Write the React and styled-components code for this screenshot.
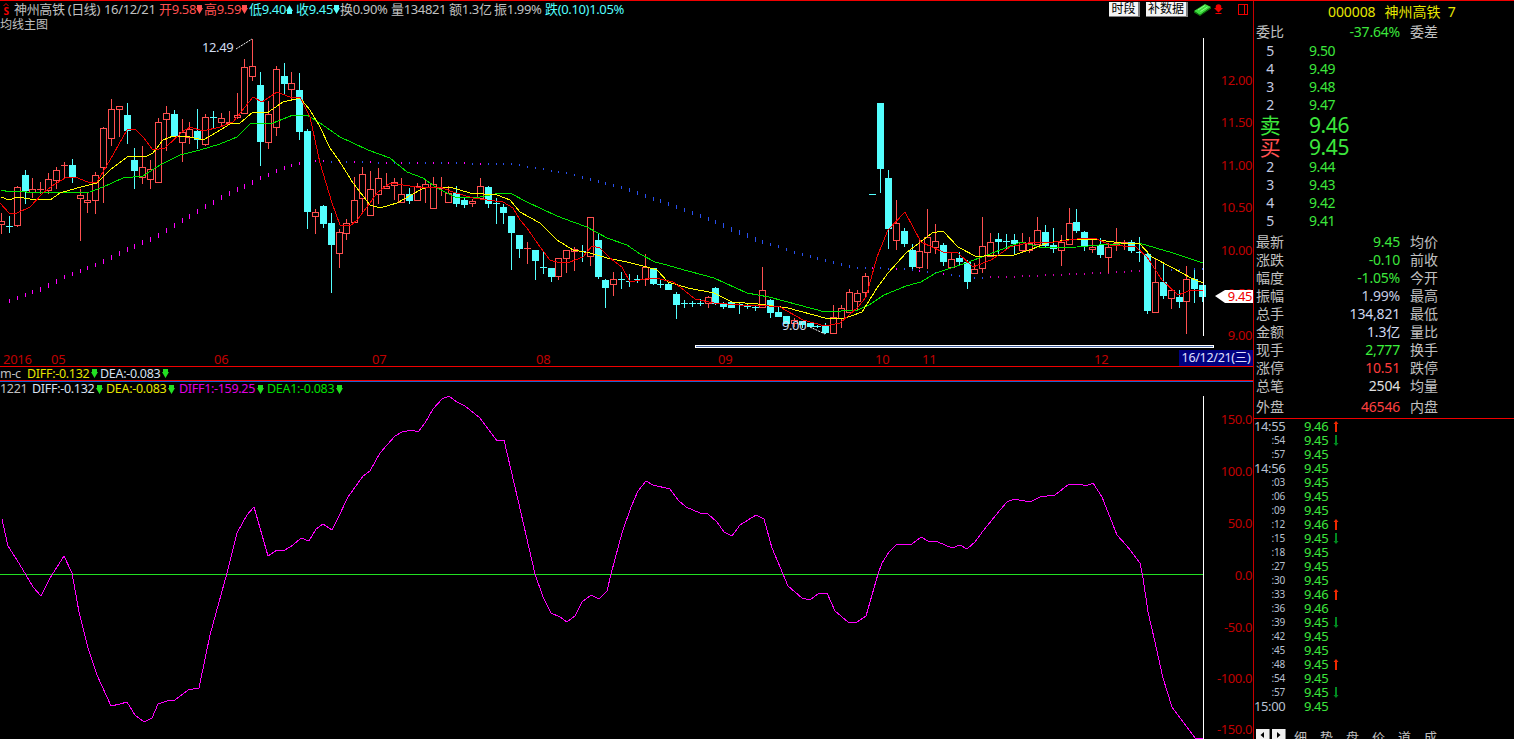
import React from 'react'
import styled, { createGlobalStyle } from 'styled-components'

const FONT = '"Noto Sans", "Noto Sans CJK SC", sans-serif'
const RED = '#ff5050'
const CYAN = '#54ffff'
const GREEN = '#3ce63c'
const GREY = '#c0c0c0'
const AXIS = '#c00000'

const xAt = i => Math.round(1 + i * 7.85)

// [type, high, body top, body bottom, low] in page pixels
const candles = [
    ['r', 213, 221, 224, 233], ['c', 216, 226, 226, 232], ['r', 186, 187, 225, 226], ['c', 170, 175, 190, 203],
    ['r', 178, 189, 192, 197], ['r', 182, 189, 189, 193], ['r', 173, 179, 190, 193], ['r', 167, 170, 180, 188],
    ['r', 162, 165, 165, 177], ['c', 159, 165, 177, 182], ['r', 189, 195, 198, 240], ['r', 193, 200, 202, 212],
    ['r', 172, 175, 200, 213], ['r', 127, 128, 167, 202], ['r', 99, 109, 138, 145], ['r', 106, 106, 109, 136],
    ['c', 103, 115, 130, 143], ['c', 148, 160, 170, 188], ['r', 146, 167, 177, 183], ['r', 160, 169, 179, 188],
    ['r', 118, 122, 182, 182], ['r', 106, 113, 119, 150], ['c', 110, 114, 135, 135], ['r', 119, 132, 142, 161],
    ['r', 122, 129, 137, 143], ['c', 109, 131, 139, 148], ['r', 114, 117, 144, 145], ['c', 111, 117, 117, 128],
    ['r', 113, 118, 122, 125], ['r', 111, 122, 123, 123], ['r', 93, 115, 117, 118], ['r', 59, 67, 113, 113],
    ['r', 39, 66, 76, 80], ['c', 72, 85, 141, 165], ['r', 101, 114, 142, 148], ['r', 66, 69, 127, 135],
    ['c', 63, 76, 83, 93], ['r', 72, 83, 89, 98], ['c', 73, 90, 131, 139], ['c', 129, 131, 211, 228],
    ['r', 209, 212, 216, 233], ['c', 205, 206, 223, 227], ['c', 213, 223, 244, 292], ['r', 229, 232, 253, 267],
    ['r', 219, 223, 233, 239], ['r', 177, 200, 222, 222], ['r', 167, 174, 198, 213], ['r', 171, 189, 215, 215],
    ['r', 168, 178, 194, 203], ['r', 173, 186, 188, 188], ['r', 178, 182, 185, 199], ['r', 178, 194, 202, 202],
    ['c', 188, 194, 200, 203], ['r', 183, 186, 200, 200], ['r', 180, 184, 187, 202], ['r', 177, 184, 208, 208],
    ['r', 177, 187, 188, 195], ['r', 186, 193, 202, 202], ['c', 186, 193, 203, 206], ['c', 197, 200, 204, 207],
    ['r', 199, 201, 203, 206], ['r', 178, 186, 198, 198], ['c', 186, 187, 203, 207], ['c', 198, 203, 203, 223],
    ['c', 204, 207, 212, 223], ['c', 216, 216, 232, 269], ['c', 235, 235, 248, 257], ['r', 242, 248, 248, 263],
    ['c', 250, 250, 260, 279], ['c', 252, 267, 267, 273], ['c', 268, 268, 276, 281], ['r', 258, 258, 276, 279],
    ['r', 250, 250, 258, 272], ['r', 247, 249, 251, 270], ['c', 245, 251, 251, 261], ['r', 217, 217, 256, 265],
    ['c', 233, 240, 276, 278], ['c', 279, 280, 287, 307], ['r', 272, 279, 284, 295], ['c', 272, 279, 279, 288],
    ['c', 274, 281, 281, 286], ['c', 275, 279, 279, 282], ['r', 254, 267, 279, 285], ['c', 268, 268, 283, 284],
    ['c', 280, 284, 284, 287], ['c', 282, 284, 289, 289], ['c', 292, 294, 304, 318], ['c', 300, 303, 303, 307],
    ['c', 301, 303, 303, 306], ['c', 299, 303, 303, 305], ['r', 296, 297, 303, 307], ['c', 287, 288, 303, 304],
    ['c', 302, 304, 306, 308], ['c', 302, 302, 307, 307], ['c', 302, 304, 304, 313], ['c', 303, 306, 306, 308],
    ['c', 305, 307, 307, 310], ['r', 267, 290, 307, 307], ['c', 299, 300, 312, 317], ['c', 307, 312, 316, 316],
    ['c', 316, 316, 323, 323], ['r', 318, 320, 323, 326], ['c', 321, 321, 324, 327], ['c', 323, 323, 326, 326],
    ['c', 325, 326, 326, 327], ['c', 323, 326, 332, 333], ['r', 305, 317, 333, 333], ['r', 305, 308, 318, 327],
    ['r', 289, 292, 312, 312], ['r', 290, 293, 301, 310], ['r', 273, 276, 292, 297], ['c', 194, 194, 194, 194],
    ['c', 103, 103, 168, 192], ['c', 170, 178, 228, 248], ['r', 200, 223, 240, 249], ['c', 228, 231, 243, 246],
    ['c', 244, 250, 266, 268], ['r', 240, 251, 267, 268], ['r', 209, 237, 252, 268], ['r', 224, 241, 247, 253],
    ['c', 243, 245, 261, 265], ['r', 252, 259, 267, 267], ['c', 252, 258, 261, 265], ['c', 260, 262, 281, 288],
    ['r', 263, 269, 273, 273], ['r', 217, 246, 268, 272], ['r', 233, 242, 256, 256], ['c', 233, 239, 241, 255],
    ['c', 234, 241, 241, 248], ['c', 234, 240, 243, 253], ['r', 233, 242, 250, 252], ['r', 237, 243, 250, 252],
    ['r', 217, 230, 244, 244], ['c', 225, 232, 245, 247], ['c', 228, 245, 248, 252], ['r', 235, 242, 250, 265],
    ['r', 208, 223, 244, 244], ['c', 209, 222, 230, 232], ['c', 231, 232, 246, 250], ['r', 240, 247, 249, 252],
    ['c', 238, 245, 254, 257], ['r', 243, 247, 257, 272], ['r', 228, 243, 245, 250], ['r', 240, 242, 243, 249],
    ['c', 240, 242, 250, 252], ['c', 237, 252, 252, 261], ['c', 253, 254, 310, 313], ['r', 258, 282, 312, 312],
    ['c', 263, 282, 295, 298], ['r', 290, 290, 298, 308], ['c', 290, 297, 301, 307], ['r', 266, 279, 301, 333],
    ['c', 270, 279, 288, 302], ['c', 285, 285, 296, 301],
]

const ma5 = [[0, 203], [9, 213], [17, 213], [30, 207], [43, 193], [55, 184], [67, 177], [75, 177], [88, 182], [97, 182], [110, 160], [127, 130], [135, 129], [143, 137], [153, 150], [165, 148], [182, 132], [190, 127], [203, 131], [220, 127], [233, 122], [253, 97], [262, 102], [277, 92], [290, 97], [300, 97], [310, 117], [320, 163], [332, 203], [340, 225], [350, 226], [357, 220], [367, 207], [377, 193], [390, 183], [403, 185], [423, 188], [440, 187], [453, 192], [473, 198], [487, 200], [503, 202], [513, 208], [520, 220], [527, 228], [540, 247], [550, 260], [560, 263], [570, 262], [583, 257], [592, 246], [600, 248], [610, 258], [622, 267], [630, 282], [640, 280], [650, 278], [660, 279], [673, 282], [680, 287], [695, 299], [714, 303], [740, 305], [758, 305], [780, 307], [803, 320], [825, 326], [840, 323], [858, 307], [866, 297], [877, 257], [888, 230], [905, 212], [921, 242], [943, 252], [958, 253], [973, 267], [991, 260], [1010, 247], [1032, 242], [1054, 242], [1077, 239], [1095, 238], [1110, 245], [1136, 247], [1147, 257], [1162, 280], [1178, 295], [1191, 290], [1203, 290]]
const ma10 = [[1, 197], [9, 200], [17, 197], [30, 199], [50, 200], [60, 193], [77, 188], [97, 183], [110, 170], [127, 157], [147, 156], [153, 153], [163, 140], [173, 136], [190, 137], [203, 140], [217, 132], [230, 124], [240, 123], [253, 112], [267, 113], [283, 102], [300, 98], [310, 110], [320, 127], [330, 148], [340, 162], [353, 183], [370, 205], [380, 208], [397, 203], [420, 190], [427, 187], [450, 187], [470, 193], [497, 195], [510, 200], [520, 212], [540, 223], [557, 240], [573, 250], [590, 253], [607, 258], [627, 262], [647, 267], [657, 270], [668, 282], [688, 288], [714, 293], [732, 302], [758, 304], [788, 308], [825, 318], [843, 319], [862, 312], [877, 288], [888, 273], [906, 253], [932, 233], [943, 231], [958, 247], [977, 257], [991, 255], [1014, 255], [1032, 249], [1047, 243], [1073, 239], [1099, 240], [1121, 243], [1139, 243], [1152, 257], [1173, 268], [1191, 278], [1203, 283]]
const ma20 = [[1, 190], [10, 192], [20, 191], [33, 193], [90, 192], [103, 187], [123, 178], [143, 176], [160, 165], [180, 155], [200, 150], [220, 144], [237, 137], [250, 124], [273, 123], [293, 115], [307, 115], [320, 123], [340, 137], [368, 150], [390, 158], [407, 172], [423, 178], [437, 188], [457, 198], [480, 197], [500, 193], [510, 193], [527, 202], [557, 216], [573, 222], [587, 227], [607, 238], [627, 245], [640, 254], [655, 262], [667, 265], [677, 268], [714, 278], [747, 293], [769, 297], [799, 305], [825, 312], [858, 310], [869, 305], [884, 295], [906, 286], [921, 282], [936, 273], [966, 263], [995, 252], [1021, 242], [1043, 248], [1077, 247], [1099, 245], [1139, 243], [1173, 253], [1203, 263]]
const sar = [[0, 302], [9, 299], [33, 290], [64, 275], [96, 263], [127, 247], [158, 233], [190, 213], [221, 195], [253, 179], [284, 166], [308, 159], [331, 161], [512, 163], [535, 167], [575, 174], [622, 186], [669, 202], [716, 220], [762, 240], [795, 251], [858, 267], [904, 268], [952, 274], [975, 277], [1054, 274], [1102, 272], [1136, 270], [1203, 268]]
const diff1 = [[2, 519], [8, 546], [17, 560], [26, 575], [33, 587], [41, 596], [50, 578], [64, 556], [72, 573], [79, 612], [88, 648], [97, 675], [111, 706], [120, 704], [127, 702], [135, 715], [144, 722], [152, 718], [158, 704], [167, 701], [175, 700], [188, 690], [199, 688], [210, 635], [227, 573], [237, 533], [247, 515], [254, 507], [268, 556], [277, 550], [285, 550], [293, 545], [301, 538], [309, 541], [316, 529], [323, 524], [332, 530], [338, 518], [348, 497], [363, 476], [370, 471], [380, 453], [395, 436], [402, 432], [412, 430], [418, 432], [425, 423], [433, 409], [442, 399], [449, 396], [457, 402], [465, 406], [480, 418], [497, 441], [504, 440], [518, 500], [535, 574], [543, 597], [551, 613], [560, 617], [567, 622], [575, 616], [582, 602], [591, 595], [599, 599], [607, 591], [611, 574], [622, 533], [631, 507], [638, 491], [646, 481], [653, 485], [670, 489], [678, 500], [686, 507], [700, 513], [708, 514], [717, 522], [724, 532], [732, 536], [740, 525], [756, 515], [764, 519], [772, 548], [783, 574], [788, 586], [802, 598], [810, 600], [818, 594], [827, 593], [835, 611], [848, 622], [857, 622], [866, 616], [878, 574], [882, 563], [889, 552], [897, 544], [912, 544], [921, 537], [928, 541], [938, 542], [952, 548], [960, 545], [967, 549], [975, 542], [983, 531], [1000, 510], [1007, 502], [1014, 499], [1030, 502], [1040, 497], [1055, 495], [1069, 484], [1080, 484], [1086, 486], [1093, 483], [1102, 497], [1117, 535], [1127, 546], [1140, 563], [1143, 578], [1148, 612], [1155, 642], [1163, 678], [1172, 707], [1195, 738], [1203, 738]]

const toPoints = line => line.map(p => p.join(',')).join(' ')

const sarAt = x => {
    for (let k = 1; k < sar.length; k++) {
        if (x <= sar[k][0]) {
            const [x0, y0] = sar[k - 1]
            const [x1, y1] = sar[k]
            return y0 + ((y1 - y0) * (x - x0)) / (x1 - x0)
        }
    }
    return sar[sar.length - 1][1]
}

const sarColor = i => {
    if (i < 41) return '#ff00ff'
    if (i < 62) return i % 2 ? '#ff00ff' : '#2850f0'
    if (i < 111) return '#2850f0'
    if (i < 126) return i % 3 ? '#2850f0' : '#ff00ff'
    if (i < 146) return '#d000b0'
    return '#2850f0'
}

const sarDots = Array.from({ length: 153 }, (_, n) => {
    const i = n + 1
    const x = xAt(i)
    const slope = Math.abs(sarAt(x + 4) - sarAt(x - 4))
    return { i, x, y: Math.round(sarAt(x)), h: Math.max(2, Math.min(5, Math.round(slope * 1.3))) }
})

const priceTicks = [['12.00', 80], ['11.50', 122], ['11.00', 165], ['10.50', 207], ['10.00', 250], ['9.50', 293], ['9.00', 335]]
const macdTicks = [['150.0', 419], ['100.0', 471], ['50.0', 523], ['0.0', 575], ['-50.0', 627], ['-100.0', 678], ['-150.0', 729]]
const dates = [['2016', 3], ['05', 51], ['06', 214], ['07', 372], ['08', 536], ['09', 718], ['10', 875], ['11', 922], ['12', 1094]]

const asks = [['5', '9.50'], ['4', '9.49'], ['3', '9.48'], ['2', '9.47']]
const bids = [['2', '9.44'], ['3', '9.43'], ['4', '9.42'], ['5', '9.41']]
const stats = [
    ['最新', '9.45', GREEN, '均价'],
    ['涨跌', '-0.10', GREEN, '前收'],
    ['幅度', '-1.05%', GREEN, '今开'],
    ['振幅', '1.99%', '#c4cbe0', '最高'],
    ['总手', '134,821', '#d0d8f0', '最低'],
    ['金额', '1.3亿', '#d0d8f0', '量比'],
    ['现手', '2,777', '#3cf03c', '换手'],
    ['涨停', '10.51', '#ff3c3c', '跌停'],
    ['总笔', '2504', '#e0e0e0', '均量'],
]
const ticks = [
    ['14:55', '9.46', 'up'], [':54', '9.45', 'down'], [':57', '9.45'], ['14:56', '9.45'], [':03', '9.45'], [':06', '9.45'], [':09', '9.45'],
    [':12', '9.46', 'up'], [':15', '9.45', 'down'], [':18', '9.45'], [':27', '9.45'], [':30', '9.45'], [':33', '9.46', 'up'], [':36', '9.46'],
    [':39', '9.45', 'down'], [':42', '9.45'], [':45', '9.45'], [':48', '9.45', 'up'], [':54', '9.45'], [':57', '9.45', 'down'], ['15:00', '9.45'],
]
const tabs = ['细', '势', '盘', '价', '道', '成']

const GlobalStyle = createGlobalStyle`
    html, body {
        margin: 0;
        height: 100%;
        background: #000;
        overflow: hidden;
    }
`
const Screen = styled.div`
    display: flex;
    width: 1514px;
    height: 739px;
    box-sizing: border-box;
    border-top: 1px solid #f00000;
    background: #000;
    color: ${GREY};
    font-family: ${FONT};
    overflow: hidden;
`
const Main = styled.main`
    position: relative;
    display: flex;
    flex-direction: column;
    width: 1253px;
    flex: none;
`
const QuoteBar = styled.header`
    display: flex;
    align-items: center;
    flex: none;
    height: 17px;
    font-size: 13px;
    line-height: 15px;
    letter-spacing: -0.35px;
    white-space: nowrap;
`
const QuoteItem = styled.span`
    display: flex;
    align-items: center;
    flex: none;
    width: ${p => p.$w}px;
    color: ${p => p.$color || GREY};
`
const Logo = styled.svg`
    flex: none;
    width: 10px;
    height: 13px;
    margin: 0 3px 0 1px;
`
const Tools = styled.div`
    display: flex;
    align-items: center;
    gap: 6px;
    margin-left: auto;
    padding-right: 5px;
`
const ToolButton = styled.button`
    height: 15px;
    width: ${p => p.$w}px;
    padding: 0;
    border: 0;
    border-right: 2px solid #808080;
    border-bottom: 1px solid #808080;
    background: #f4f4f4;
    color: #000;
    font: 12px/14px ${FONT};
`
const ToolIcon = styled.svg`
    flex: none;
    width: ${p => p.$w}px;
    height: 13px;
    margin-right: ${p => p.$tight || 0}px;
`
const PanelToggle = styled.span`
    box-sizing: border-box;
    width: 10px;
    height: 11px;
    margin-left: 9px;
    border: 1px solid #f00000;
    background: linear-gradient(90deg, transparent 5px, #f00000 5px, #f00000 6px, transparent 6px);
`
const ChartTitle = styled.div`
    flex: none;
    height: 20px;
    font-size: 12px;
    line-height: 13px;
`
const Chart = styled.svg`
    display: block;
    flex: none;
    width: 1253px;
    height: ${p => p.$h}px;
`
const TickText = styled.text`
    fill: ${AXIS};
    font-size: 13px;
    letter-spacing: -0.4px;
    dominant-baseline: central;
    text-anchor: end;
`
const DateText = styled.text`
    fill: ${AXIS};
    font-size: 13px;
    letter-spacing: -0.3px;
    dominant-baseline: central;
`
const PeakText = styled.text`
    fill: #d0dcf0;
    font-size: 13px;
    letter-spacing: -0.4px;
    dominant-baseline: central;
`
const PriceTagText = styled.text`
    fill: #f00000;
    font-size: 13px;
    letter-spacing: -0.4px;
    dominant-baseline: central;
    text-anchor: end;
`
const DateChip = styled.div`
    position: absolute;
    top: 349px;
    right: 0;
    width: 74px;
    height: 16px;
    background: #000080;
    color: #e0e0ff;
    font-size: 12.5px;
    line-height: 16px;
    letter-spacing: -0.3px;
    text-align: center;
    white-space: nowrap;
`
const LegendBar = styled.div`
    display: flex;
    align-items: center;
    flex: none;
    box-sizing: border-box;
    height: 15px;
    border-top: 1px solid #f00000;
    border-bottom: 1px solid #f00000;
    box-shadow: 0 1px 0 #2060d0;
    font-size: 12.5px;
    line-height: 13px;
    letter-spacing: -0.3px;
    white-space: nowrap;
`
const IndicatorBar = styled.div`
    display: flex;
    align-items: center;
    flex: none;
    height: 15px;
    padding-top: 1px;
    box-sizing: border-box;
    font-size: 12.5px;
    line-height: 14px;
    letter-spacing: -0.3px;
    white-space: nowrap;
`
const LegendItem = styled.span`
    display: flex;
    align-items: center;
    flex: none;
    width: ${p => p.$w}px;
    color: ${p => p.$color};
`
const TriIcon = styled.svg`
    flex: none;
    width: 7px;
    height: 9px;
    margin-left: ${p => p.$gap || 0}px;
    color: ${p => p.$color};
`
const Side = styled.aside`
    display: flex;
    flex-direction: column;
    flex: 1;
    border-left: 1px solid #c80000;
    font-size: 14px;
    min-width: 0;
`
const SideTitle = styled.div`
    height: 22px;
    padding-left: 74px;
    color: #e6e600;
    font-size: 14px;
    line-height: 22px;
    white-space: nowrap;
`
const SideTitleCode = styled.span`
    margin-right: 9px;
    letter-spacing: -0.1px;
`
const Ratio = styled.div`
    display: grid;
    grid-template-columns: 44px 100px auto;
    column-gap: 0;
    height: 19px;
    padding-left: 2px;
    line-height: 18px;
`
const RatioValue = styled.span`
    color: ${p => p.$color};
    letter-spacing: -0.2px;
    text-align: right;
    white-space: nowrap;
`
const RatioTail = styled.span`
    padding-left: 10px;
`
const Level = styled.div`
    display: grid;
    grid-template-columns: 28px auto;
    column-gap: 25px;
    align-items: center;
    height: ${p => (p.$big ? 22 : 18)}px;
    padding-left: 2px;
    color: ${p => p.$color || GREY};
    font-size: ${p => (p.$big ? 21 : 14)}px;
    letter-spacing: -0.4px;
    line-height: 1;
`
const LevelName = styled.span`
    text-align: center;
    color: ${p => p.$color || '#c4cbe0'};
`
const LevelPrice = styled.span`
    color: ${GREEN};
`
const Stats = styled.div`
    margin-top: 3px;
    border-bottom: 1px solid #f00000;
`
const StatRow = styled(Ratio)`
    height: ${p => (p.$tall ? 23 : 18)}px;
    line-height: ${p => (p.$tall ? 23 : 18)}px;
`
const TickList = styled.div`
    display: flex;
    flex-direction: column;
`
const TickRow = styled.div`
    display: grid;
    grid-template-columns: 31px 48px auto;
    column-gap: 0;
    align-items: center;
    height: 14px;
    line-height: 14px;
`
const TickTime = styled.span`
    color: #b8c0d0;
    font-size: ${p => (p.$long ? 13 : 10)}px;
    letter-spacing: ${p => (p.$long ? -0.4 : -0.2)}px;
    text-align: right;
`
const TickPrice = styled.span`
    padding-left: 19px;
    color: ${GREEN};
    font-size: 13px;
    letter-spacing: -0.4px;
`
const TickArrow = styled.svg`
    display: block;
    width: 6px;
    height: 11px;
    color: ${p => (p.$up ? '#f02800' : '#008a20')};
`
const TabBar = styled.nav`
    display: flex;
    align-items: flex-start;
    height: 10px;
    margin-top: auto;
    padding-left: 2px;
    color: ${GREY};
    font-size: 13px;
    line-height: 13px;
`
const PageButton = styled.span`
    flex: none;
    width: 13px;
    height: 12px;
    margin-right: 2px;
    background: #f0f0f0;
    border-right: 1px solid #808080;
`
const PageGlyph = styled.svg`
    display: block;
    width: 13px;
    height: 10px;
`
const Tab = styled.span`
    flex: none;
    width: 26px;
    padding-top: 2px;
    text-align: left;
`
const TabGap = styled.span`
    width: 6px;
    flex: none;
`

function Tri({ color, gap }) {
    return (
        <TriIcon $color={color} $gap={gap} viewBox="0 0 7 9">
            <path d="M1 0h5v3h1L3.5 9 0 3h1z" fill="currentColor" />
        </TriIcon>
    )
}

function TriUp({ color }) {
    return (
        <TriIcon $color={color} viewBox="0 0 7 9">
            <path d="M1 9h5V6h1L3.5 0 0 6h1z" fill="currentColor" />
        </TriIcon>
    )
}

function Candle({ i, data }) {
    const [type, hi, top, bot, lo] = data
    const x = xAt(i)
    const color = type === 'r' ? RED : CYAN
    return (
        <g>
            <rect x={x} y={hi} width="1" height={Math.max(1, lo - hi + 1)} fill={color} />
            {bot - top <= 1 ? (
                <rect x={x - 3} y={top} width="7" height={bot - top + 1} fill={color} />
            ) : type === 'r' ? (
                <rect x={x - 2.5} y={top + 0.5} width="6" height={bot - top} fill="#000" stroke={color} />
            ) : (
                <rect x={x - 3} y={top} width="7" height={bot - top + 1} fill={color} />
            )}
        </g>
    )
}

function PriceChart() {
    return (
        <Chart $h={328} viewBox="0 38 1253 328">
            <g shapeRendering="crispEdges">
                {sarDots.map(d => (
                    <rect key={d.i} x={d.x} y={d.y} width="1" height={d.h} fill={sarColor(d.i)} />
                ))}
                {candles.map((c, i) => (
                    <Candle key={i} i={i} data={c} />
                ))}
                <polyline points={toPoints(ma20)} fill="none" stroke="#00e600" />
                <polyline points={toPoints(ma10)} fill="none" stroke="#ffff00" />
                <polyline points={toPoints(ma5)} fill="none" stroke="#f00000" />
                <rect x="1203" y="38" width="1" height="298" fill="#fff" />
                <rect x="695" y="345" width="519" height="3" fill="#fff" />
                <rect x="696" y="346" width="517" height="1" fill="#4060a0" />
            </g>
            <line x1="236" y1="49" x2="252" y2="39" stroke="#fff" strokeDasharray="2 1" />
            <PeakText x="202" y="47">12.49</PeakText>
            <line x1="810" y1="327" x2="825" y2="334" stroke="#fff" strokeDasharray="2 1" />
            <PeakText x="782" y="325">9.00</PeakText>
            {priceTicks.map(([label, y]) => (
                <TickText key={label} x="1252" y={y}>{label}</TickText>
            ))}
            {dates.map(([label, x]) => (
                <DateText key={label} x={x} y="359">{label}</DateText>
            ))}
            <polygon points="1215,296 1225,290 1253,290 1253,303 1225,303" fill="#fff" />
            <PriceTagText x="1252" y="296">9.45</PriceTagText>
        </Chart>
    )
}

function MacdChart() {
    return (
        <Chart $h={343} viewBox="0 396 1253 343">
            <g shapeRendering="crispEdges">
                <rect x="0" y="574" width="1203" height="1" fill="#22e022" />
                <polyline points={toPoints(diff1)} fill="none" stroke="#ff00ff" />
                <rect x="1203" y="396" width="1" height="343" fill="#fff" />
            </g>
            {macdTicks.map(([label, y]) => (
                <TickText key={label} x="1252" y={y}>{label}</TickText>
            ))}
        </Chart>
    )
}

function Arrow({ up }) {
    return (
        <TickArrow $up={up} viewBox="0 0 6 11">
            {up ? (
                <path d="M2 11V3H0.5L3 0l2.5 3H4v8z" fill="currentColor" />
            ) : (
                <path d="M2 0v8H0.5L3 11l2.5-3H4V0z" fill="currentColor" />
            )}
        </TickArrow>
    )
}

export default function App() {
    return (
        <>
            <GlobalStyle />
            <Screen>
                <Main>
                    <QuoteBar>
                        <Logo viewBox="0 0 10 13">
                            <path d="M2.5 3L5 0.5 7.5 3" fill="none" stroke="#f00000" />
                            <text x="5" y="12" textAnchor="middle" fontSize="10" fontWeight="700" fill="#f00000">S</text>
                        </Logo>
                        <QuoteItem $w={90}>神州高铁 (日线)</QuoteItem>
                        <QuoteItem $w={55}>16/12/21</QuoteItem>
                        <QuoteItem $w={45} $color={RED}>开9.58<Tri color={RED} /></QuoteItem>
                        <QuoteItem $w={45} $color={RED}>高9.59<Tri color={RED} /></QuoteItem>
                        <QuoteItem $w={47} $color={CYAN}>低9.40<TriUp color={CYAN} /></QuoteItem>
                        <QuoteItem $w={44} $color={CYAN}>收9.45<Tri color={CYAN} /></QuoteItem>
                        <QuoteItem $w={51}>换0.90%</QuoteItem>
                        <QuoteItem $w={58}>量134821</QuoteItem>
                        <QuoteItem $w={45}>额1.3亿</QuoteItem>
                        <QuoteItem $w={51}>振1.99%</QuoteItem>
                        <QuoteItem $w={80} $color={CYAN}>跌(0.10)1.05%</QuoteItem>
                        <Tools>
                            <ToolButton $w={31}>时段</ToolButton>
                            <ToolButton $w={42}>补数据</ToolButton>
                            <ToolIcon $w={17} $tight={-3} viewBox="0 0 17 13">
                                <path d="M0 8L11 1l6 3L6 12z" fill="#3cdc3c" />
                                <path d="M0 8l6 4 11-8v1.5L6 13 0 9.5z" fill="#108010" />
                                <path d="M4 7l7-4.5M6.5 8.5l7-4.5" stroke="#a0ffa0" strokeWidth="0.8" />
                            </ToolIcon>
                            <ToolIcon $w={9} viewBox="0 0 9 13">
                                <circle cx="4.5" cy="4" r="2.8" fill="#f00000" />
                                <path d="M0 5h9L4.5 9.5zM1.5 10h6v1h-6z" fill="#f00000" />
                            </ToolIcon>
                            <PanelToggle />
                        </Tools>
                    </QuoteBar>
                    <ChartTitle>均线主图</ChartTitle>
                    <PriceChart />
                    <DateChip>16/12/21(三)</DateChip>
                    <LegendBar>
                        <LegendItem $w={27} $color={GREY}>m-c</LegendItem>
                        <LegendItem $w={73} $color="#e6e600">DIFF:-0.132<Tri color="#22e022" gap={2} /></LegendItem>
                        <LegendItem $w={76} $color="#d8e0f0">DEA:-0.083<Tri color="#22e022" gap={2} /></LegendItem>
                    </LegendBar>
                    <IndicatorBar>
                        <LegendItem $w={32} $color={GREY}>1221</LegendItem>
                        <LegendItem $w={74} $color="#d8e0f0">DIFF:-0.132<Tri color="#22e022" gap={2} /></LegendItem>
                        <LegendItem $w={73} $color="#e6e600">DEA:-0.083<Tri color="#22e022" gap={2} /></LegendItem>
                        <LegendItem $w={88} $color="#e000e0">DIFF1:-159.25<Tri color="#22e022" gap={2} /></LegendItem>
                        <LegendItem $w={80} $color="#00e000">DEA1:-0.083<Tri color="#22e022" gap={2} /></LegendItem>
                    </IndicatorBar>
                    <MacdChart />
                </Main>
                <Side>
                    <SideTitle>
                        <SideTitleCode>000008</SideTitleCode>神州高铁&nbsp;&nbsp;7
                    </SideTitle>
                    <Ratio>
                        <span>委比</span>
                        <RatioValue $color={GREEN}>-37.64%</RatioValue>
                        <RatioTail>委差</RatioTail>
                    </Ratio>
                    {asks.map(([name, price]) => (
                        <Level key={name}>
                            <LevelName>{name}</LevelName>
                            <LevelPrice>{price}</LevelPrice>
                        </Level>
                    ))}
                    <Level $big>
                        <LevelName $color={GREEN}>卖</LevelName>
                        <LevelPrice>9.46</LevelPrice>
                    </Level>
                    <Level $big>
                        <LevelName $color={RED}>买</LevelName>
                        <LevelPrice>9.45</LevelPrice>
                    </Level>
                    {bids.map(([name, price]) => (
                        <Level key={name}>
                            <LevelName>{name}</LevelName>
                            <LevelPrice>{price}</LevelPrice>
                        </Level>
                    ))}
                    <Stats>
                        {stats.map(([label, value, color, tail]) => (
                            <StatRow key={label}>
                                <span>{label}</span>
                                <RatioValue $color={color}>{value}</RatioValue>
                                <RatioTail>{tail}</RatioTail>
                            </StatRow>
                        ))}
                        <StatRow $tall>
                            <span>外盘</span>
                            <RatioValue $color="#ff4040">46546</RatioValue>
                            <RatioTail>内盘</RatioTail>
                        </StatRow>
                    </Stats>
                    <TickList>
                        {ticks.map(([time, price, dir], i) => (
                            <TickRow key={i}>
                                <TickTime $long={time.length > 3}>{time}</TickTime>
                                <TickPrice>{price}</TickPrice>
                                {dir && <Arrow up={dir === 'up'} />}
                            </TickRow>
                        ))}
                    </TickList>
                    <TabBar>
                        <PageButton>
                            <PageGlyph viewBox="0 0 13 10"><path d="M8 3v6L4.5 6z" fill="#000" /></PageGlyph>
                        </PageButton>
                        <PageButton>
                            <PageGlyph viewBox="0 0 13 10"><path d="M5 3v6L8.5 6z" fill="#000" /></PageGlyph>
                        </PageButton>
                        <TabGap />
                        {tabs.map(t => (
                            <Tab key={t}>{t}</Tab>
                        ))}
                    </TabBar>
                </Side>
            </Screen>
        </>
    )
}
